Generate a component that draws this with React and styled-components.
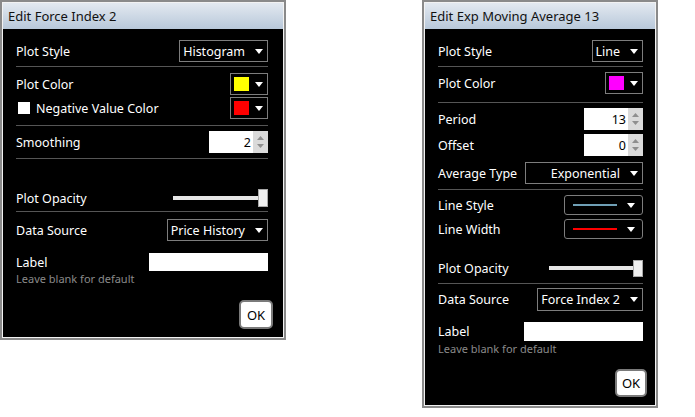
import React from 'react';
import styled, { createGlobalStyle } from 'styled-components';

const Global = createGlobalStyle`
  html, body { margin: 0; padding: 0; background: #fff; }
  body { font-family: "Noto Sans", "Liberation Sans", sans-serif; }
`;

const Desktop = styled.div`
  display: flex;
  align-items: flex-start;
  gap: 136px;
  width: 695px;
  height: 417px;
`;

const Dialog = styled.div`
  width: ${p => p.$w}px;
  height: ${p => p.$h}px;
  box-sizing: border-box;
  border: 2px solid #8a8a8a;
  padding: 1px;
  background: #f2f2f2;
  display: flex;
  flex-direction: column;
  flex: none;
`;

const TitleBar = styled.div`
  height: 26px;
  flex: none;
  box-sizing: border-box;
  padding-left: 5px;
  display: flex;
  align-items: center;
  background: linear-gradient(#e3e9f0, #b8c8da);
  color: #111;
  font-size: 13px;
`;

const Body = styled.div`
  flex: 1;
  background: #000;
  padding: 11px ${p => p.$pr}px 0 13px;
  display: flex;
  flex-direction: column;
  color: #fff;
  font-size: 12.5px;
`;

const Row = styled.div`
  display: flex;
  align-items: center;
  justify-content: space-between;
  height: ${p => p.$h || 22}px;
  margin-top: ${p => p.$mt || 0}px;
  flex: none;
`;

const Label = styled.span`
  color: #fff;
  font-size: 12.5px;
  white-space: nowrap;
`;

const CheckLabel = styled.label`
  display: flex;
  align-items: center;
  gap: 6px;
  padding-left: 2px;
  color: #fff;
  font-size: 12.5px;
`;

const CheckBox = styled.span`
  width: 12px;
  height: 12px;
  background: #fff;
  display: inline-block;
`;

const Divider = styled.div`
  height: 1px;
  background: #555;
  flex: none;
  margin: ${p => p.$mt}px 0 ${p => p.$mb}px;
`;

const Select = styled.div`
  width: ${p => p.$w}px;
  height: 100%;
  box-sizing: border-box;
  border: 1px solid #7d7d7d;
  display: flex;
  align-items: center;
  justify-content: flex-end;
  gap: 10px;
  padding-right: 4px;
  color: #fff;
  font-size: 12.5px;
`;

const ColorBox = styled.div`
  width: 38px;
  height: 100%;
  box-sizing: border-box;
  border: 1px solid #7d7d7d;
  display: flex;
  align-items: center;
  justify-content: space-between;
  padding: 0 4px 0 3px;
`;

const Swatch = styled.div`
  width: 15px;
  height: 14px;
  background: ${p => p.$c};
`;

const NumberBox = styled.div`
  display: flex;
  width: 59px;
  height: 100%;
`;

const NumField = styled.div`
  flex: 1;
  background: #fff;
  color: #000;
  display: flex;
  align-items: center;
  justify-content: flex-end;
  padding-right: 2px;
  font-size: 12.5px;
`;

const Spinner = styled.div`
  width: 15px;
  flex: none;
  background: #dadada;
  display: flex;
  flex-direction: column;
  align-items: center;
  justify-content: center;
  gap: 4px;
`;

const Slider = styled.div`
  width: ${p => p.$w}px;
  height: ${p => p.$th}px;
  display: flex;
  align-items: center;
`;

const Track = styled.div`
  flex: 1;
  height: 4px;
  background: #e6e6e6;
`;

const Thumb = styled.div`
  width: 10px;
  height: 100%;
  flex: none;
  box-sizing: border-box;
  background: #efefef;
  border: 1px solid #a8a8a8;
`;

const LineSelect = styled.div`
  width: 79px;
  height: 100%;
  box-sizing: border-box;
  border: 1px solid #7d7d7d;
  border-radius: 3px;
  display: flex;
  align-items: center;
  justify-content: space-between;
  padding: 0 7px 0 8px;
`;

const Stroke = styled.div`
  width: 44px;
  height: 2px;
  background: ${p => p.$c};
`;

const TextInput = styled.div`
  width: ${p => p.$w}px;
  height: 100%;
  background: #fff;
`;

const Hint = styled.div`
  color: #8a8a8a;
  font-size: 11px;
  line-height: 14px;
  margin-top: 1px;
  flex: none;
`;

const OkButton = styled.button`
  align-self: flex-end;
  margin: ${p => p.$mt}px ${p => p.$mr}px 0 0;
  width: ${p => p.$w}px;
  height: ${p => p.$h}px;
  box-sizing: border-box;
  background: #fff;
  border: 2px solid #7a7a7a;
  border-radius: 5px;
  color: #000;
  font-family: inherit;
  font-size: 13px;
  padding: 0;
  flex: none;
`;

const Caret = ({ color = '#fff' }) => (
  <svg width="8" height="5" viewBox="0 0 8 5">
    <polygon points="0,0 8,0 4,5" fill={color} />
  </svg>
);

const SpinArrow = ({ up }) => (
  <svg width="7" height="4" viewBox="0 0 7 4">
    <polygon points={up ? '0,4 7,4 3.5,0' : '0,0 7,0 3.5,4'} fill="#8e8e8e" />
  </svg>
);

const Dropdown = ({ w, value }) => (
  <Select $w={w}>
    <span>{value}</span>
    <Caret />
  </Select>
);

const ColorPicker = ({ c }) => (
  <ColorBox>
    <Swatch $c={c} />
    <Caret />
  </ColorBox>
);

const NumberInput = ({ value }) => (
  <NumberBox>
    <NumField>{value}</NumField>
    <Spinner>
      <SpinArrow up />
      <SpinArrow />
    </Spinner>
  </NumberBox>
);

const OpacitySlider = ({ w, th }) => (
  <Slider $w={w} $th={th}>
    <Track />
    <Thumb />
  </Slider>
);

const LineDropdown = ({ c }) => (
  <LineSelect>
    <Stroke $c={c} />
    <Caret />
  </LineSelect>
);

export default function App() {
  return (
    <>
      <Global />
      <Desktop>
        <Dialog $w={286} $h={340}>
          <TitleBar>Edit Force Index 2</TitleBar>
          <Body $pr={15}>
            <Row>
              <Label>Plot Style</Label>
              <Dropdown w={89} value="Histogram" />
            </Row>
            <Divider $mt={4} $mb={6} />
            <Row>
              <Label>Plot Color</Label>
              <ColorPicker c="#ffff00" />
            </Row>
            <Row $mt={2}>
              <CheckLabel>
                <CheckBox />
                Negative Value Color
              </CheckLabel>
              <ColorPicker c="#ff0000" />
            </Row>
            <Divider $mt={6} $mb={5} />
            <Row>
              <Label>Smoothing</Label>
              <NumberInput value="2" />
            </Row>
            <Divider $mt={5} $mb={28} />
            <Row>
              <Label>Plot Opacity</Label>
              <OpacitySlider w={95} th={18} />
            </Row>
            <Divider $mt={2} $mb={7} />
            <Row>
              <Label>Data Source</Label>
              <Dropdown w={101} value="Price History" />
            </Row>
            <Row $mt={12} $h={18}>
              <Label>Label</Label>
              <TextInput $w={119} />
            </Row>
            <Hint>Leave blank for default</Hint>
            <OkButton $mt={14} $mr={-5} $w={34} $h={29}>OK</OkButton>
          </Body>
        </Dialog>

        <Dialog $w={236} $h={408}>
          <TitleBar>Edit Exp Moving Average 13</TitleBar>
          <Body $pr={12}>
            <Row>
              <Label>Plot Style</Label>
              <Dropdown w={51} value="Line" />
            </Row>
            <Divider $mt={4} $mb={5} />
            <Row>
              <Label>Plot Color</Label>
              <ColorPicker c="#ff00ff" />
            </Row>
            <Divider $mt={8} $mb={5} />
            <Row>
              <Label>Period</Label>
              <NumberInput value="13" />
            </Row>
            <Row $mt={4}>
              <Label>Offset</Label>
              <NumberInput value="0" />
            </Row>
            <Row $mt={6}>
              <Label>Average Type</Label>
              <Dropdown w={118} value="Exponential" />
            </Row>
            <Divider $mt={5} $mb={5} />
            <Row $h={20}>
              <Label>Line Style</Label>
              <LineDropdown c="#6f9fb5" />
            </Row>
            <Row $h={20} $mt={4}>
              <Label>Line Width</Label>
              <LineDropdown c="#ff0000" />
            </Row>
            <Row $mt={18}>
              <Label>Plot Opacity</Label>
              <OpacitySlider w={94} th={17} />
            </Row>
            <Divider $mt={4} $mb={4} />
            <Row $h={23}>
              <Label>Data Source</Label>
              <Dropdown w={106} value="Force Index 2" />
            </Row>
            <Row $mt={11} $h={19}>
              <Label>Label</Label>
              <TextInput $w={119} />
            </Row>
            <Hint>Leave blank for default</Hint>
            <OkButton $mt={13} $mr={-4} $w={32} $h={28}>OK</OkButton>
          </Body>
        </Dialog>
      </Desktop>
    </>
  );
}
